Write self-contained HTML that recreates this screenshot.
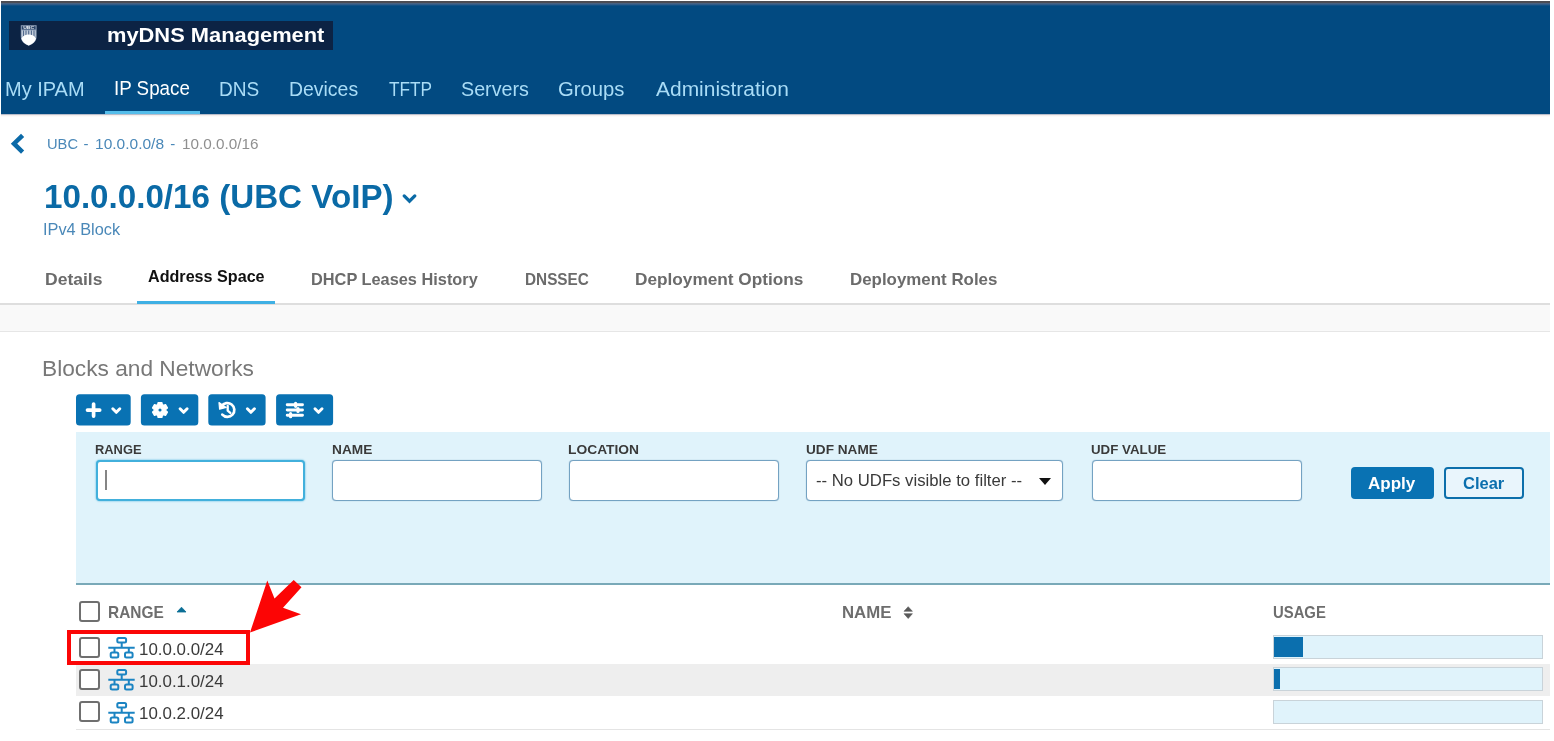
<!DOCTYPE html>
<html lang="en">
<head>
<meta charset="utf-8">
<title>myDNS Management</title>
<style>
*{box-sizing:border-box;margin:0;padding:0}
html,body{width:1554px;height:741px;overflow:hidden;background:#fff}
body{filter:blur(0.45px);position:relative;font-family:"Liberation Sans",sans-serif;color:#333}
.a{position:absolute;white-space:nowrap;line-height:1}
.t{position:absolute;white-space:nowrap;line-height:1;transform-origin:0 50%}
#hdr{left:1px;top:1px;width:1549px;height:113px;background:#024a81}
#topline{left:1px;top:1px;width:1549px;height:5px;background:linear-gradient(#4a4a50,#4c4e57 35%,#476283 50%,#2a5a8a 75%,#024a81)}
#hdrshadow{left:1px;top:114px;width:1549px;height:3px;background:linear-gradient(rgba(70,90,130,.55),rgba(200,170,160,.18) 50%,rgba(255,255,255,0))}
#logo{left:9px;top:21px;width:324px;height:29px;background:#0c2344}
#navline{left:105px;top:110.800px;width:94.500px;height:3.700px;background:#55bdea}
#tabline{left:0;top:303px;width:1550px;height:2px;background:#dedede}
#tabon{left:137px;top:300.800px;width:138px;height:3.200px;background:#3fb0e4}
#band{left:0;top:305px;width:1550px;height:26.500px;background:#f9f9f9;border-bottom:1.500px solid #e6e6e6}
#fpanel{left:76px;top:432px;width:1474px;height:152.600px;background:#e0f3fb;border-bottom:2px solid #79a9b8}
.inp{top:460px;height:41px;background:#fff;border:1px solid #74a2c2;border-radius:4px;box-shadow:0 0 1px #74a2c2}
.cb{width:21px;height:21px;border:2px solid #6f6f6f;border-radius:3px;background:#fff}
.bar{left:1273px;width:270px;height:24px;background:#e0f3fb;border:1px solid #c9d3d9}
.fill{left:1274px;height:20px;background:#0b6fae}
</style>
</head>
<body>
<div class="a" id="hdr"></div>
<div class="a" id="topline"></div>
<div class="a" id="hdrshadow"></div>
<div class="a" id="logo"></div>
<svg class="a" style="left:20px;top:24px" width="18" height="23" viewBox="20 24 18 23">
 <path d="M20.800 25.200h15.800v11.300c0 4.600-3.400 7.600-7.900 9.200c-4.500-1.600-7.900-4.600-7.900-9.200z" fill="#93a3bb"/>
 <path d="M21.800 26.200h13.800v3.300h-13.800z" fill="#2b4468"/>
 <text x="28.700" y="29.100" font-size="3.800" font-weight="bold" text-anchor="middle" fill="#eef2f7" font-family="Liberation Sans, sans-serif" textLength="11" lengthAdjust="spacingAndGlyphs">UBC</text>
 <path d="M21.800 30.500h13.800v6h-13.800z" fill="#c4cedc"/>
 <path d="M23.500 30.500v6M26 30.500v6M28.700 30.500v6M31.400 30.500v6M34 30.500v6" stroke="#50688c" stroke-width="1.100"/>
 <path d="M21.400 38.600c1.300-2.600 4.100-4 7.300-4s6 1.400 7.300 4c-.8 3.400-3.600 5.500-7.300 6.900c-3.700-1.400-6.500-3.500-7.300-6.900z" fill="#fff"/>
</svg>

<div class="a" id="navline"></div>

<svg class="a" style="left:8px;top:131px" width="20" height="26" viewBox="8 131 20 26"><path d="M22.600 135.300L14 143.700L22.600 152.100" stroke="#0b6aa8" stroke-width="4.500" fill="none" stroke-linejoin="miter"/></svg>

<svg class="a" style="left:398px;top:190px" width="24" height="18" viewBox="398 190 24 18"><path d="M404.200 195.900L409.500 201.100L414.800 195.900" stroke="#0a6aa6" stroke-width="3.300" fill="none" stroke-linecap="round" stroke-linejoin="miter"/></svg>

<div class="a" id="tabline"></div>
<div class="a" id="band"></div>
<div class="a" id="tabon"></div>


<svg class="a" style="left:70px;top:390px" width="270" height="40" viewBox="70 390 270 40">
<g fill="#0972b3"><rect x="76" y="394.300" width="54.700" height="31.200" rx="3.500"/><rect x="140.900" y="394.300" width="57.400" height="31.200" rx="3.500"/><rect x="208.300" y="394.300" width="57.300" height="31.200" rx="3.500"/><rect x="276.100" y="394.300" width="57" height="31.200" rx="3.500"/></g>
<path d="M87.500 410.100H99.700M93.600 404.100V416.100" stroke="#fff" stroke-width="3.700" stroke-linecap="round" fill="none"/>
<path d="M112.8 408.800 L116.3 412.300 L119.8 408.800" stroke="#fff" stroke-width="3" fill="none" stroke-linecap="round" stroke-linejoin="round"/>
<path transform="translate(160 410)" fill="#fff" fill-rule="evenodd" stroke="#fff" stroke-width="1.300" stroke-linejoin="round" d="M-2.30 -5.43 L-1.91 -7.46 L1.91 -7.46 L2.30 -5.43 L3.56 -4.71 L5.51 -5.38 L7.41 -2.08 L5.85 -0.73 L5.85 0.73 L7.41 2.08 L5.51 5.38 L3.56 4.71 L2.30 5.43 L1.91 7.46 L-1.91 7.46 L-2.30 5.43 L-3.56 4.71 L-5.51 5.38 L-7.41 2.08 L-5.85 0.73 L-5.85 -0.73 L-7.41 -2.08 L-5.51 -5.38 L-3.56 -4.71Z M2.2 0 A2.2 2.2 0 1 0 -2.2 0 A2.2 2.2 0 1 0 2.2 0Z"/>
<path d="M180.1 408.800 L183.6 412.300 L187.1 408.800" stroke="#fff" stroke-width="3" fill="none" stroke-linecap="round" stroke-linejoin="round"/>
<path d="M221.600 406.300A6.900 6.900 0 1 1 222.300 414.600" stroke="#fff" stroke-width="2.700" fill="none" stroke-linecap="round"/>
<path d="M219 402.600L219.600 409.200L226.200 407.400Z" fill="#fff" stroke="#fff" stroke-width="1.200" stroke-linejoin="round"/>
<path d="M227.700 406V410.700L230.300 412.900" stroke="#fff" stroke-width="2.300" fill="none" stroke-linecap="round" stroke-linejoin="round"/>
<path d="M247.4 408.800 L250.9 412.300 L254.4 408.800" stroke="#fff" stroke-width="3" fill="none" stroke-linecap="round" stroke-linejoin="round"/>
<path d="M287.200 404.800H302.500M287.200 410H302.500M287.200 415.200H302.500" stroke="#fff" stroke-width="2.900" stroke-linecap="round" fill="none"/>
<path d="M295.600 403.300V406.300M298 408.500V411.500M290.600 413.700V416.700" stroke="#fff" stroke-width="3.200" stroke-linecap="round" fill="none"/>
<path d="M315.0 408.800 L318.5 412.300 L322.0 408.800" stroke="#fff" stroke-width="3" fill="none" stroke-linecap="round" stroke-linejoin="round"/>
</svg>

<div class="a" id="fpanel"></div>
<div class="a inp" style="left:96px;width:209px;border:2px solid #42b0dc;box-shadow:0 0 2px #42b0dc"></div>
<div class="a" style="left:105px;top:469.500px;width:2px;height:20.500px;background:#858585"></div>
<div class="a inp" style="left:332px;width:210px"></div>
<div class="a inp" style="left:569px;width:210px"></div>
<div class="a inp" style="left:806px;width:257px"></div>
<div class="a" style="left:1039px;top:478px;width:0;height:0;border-left:6px solid transparent;border-right:6px solid transparent;border-top:7px solid #111"></div>
<div class="a inp" style="left:1092px;width:210px"></div>
<div class="a" style="left:1351px;top:466.700px;width:83px;height:32px;background:#0972b3;border-radius:4px"></div>
<div class="a" style="left:1444px;top:466.700px;width:80px;height:32px;background:#e9f5fc;border:2.400px solid #0c6fab;border-radius:4px"></div>

<div class="a" style="left:76px;top:664px;width:1474px;height:32px;background:#eeeeee"></div>
<div class="a" style="left:76px;top:729px;width:1474px;height:1px;background:#e4e4e4"></div>

<div class="a cb" style="left:79px;top:601px"></div>
<svg class="a" style="left:107px;top:636.1px" width="30" height="24" viewBox="107 -1 30 24"><g fill="none" stroke="#1b84c2" stroke-width="2"><rect x="117.300" y="1" width="8.800" height="4.600" rx="1.500"/><rect x="110.700" y="15.500" width="7.600" height="5" rx="1.500"/><rect x="125" y="15.500" width="7.600" height="5" rx="1.500"/><path d="M121.700 5.600V10.800M108.300 10.800H134.700M114.500 10.800V15.500M128.800 10.800V15.500"/></g></svg>
<svg class="a" style="left:107px;top:668.3px" width="30" height="24" viewBox="107 -1 30 24"><g fill="none" stroke="#1b84c2" stroke-width="2"><rect x="117.300" y="1" width="8.800" height="4.600" rx="1.500"/><rect x="110.700" y="15.500" width="7.600" height="5" rx="1.500"/><rect x="125" y="15.500" width="7.600" height="5" rx="1.500"/><path d="M121.700 5.600V10.800M108.300 10.800H134.700M114.500 10.800V15.500M128.800 10.800V15.500"/></g></svg>
<svg class="a" style="left:107px;top:700.6px" width="30" height="24" viewBox="107 -1 30 24"><g fill="none" stroke="#1b84c2" stroke-width="2"><rect x="117.300" y="1" width="8.800" height="4.600" rx="1.500"/><rect x="110.700" y="15.500" width="7.600" height="5" rx="1.500"/><rect x="125" y="15.500" width="7.600" height="5" rx="1.500"/><path d="M121.700 5.600V10.800M108.300 10.800H134.700M114.500 10.800V15.500M128.800 10.800V15.500"/></g></svg>
<svg class="a" style="left:176px;top:606px" width="11" height="7" viewBox="0 0 11 7"><path d="M1 6L5.500 1.200L10 6Z" fill="#0a6e96" stroke="#0a6e96" stroke-width="0.800" stroke-linejoin="round"/></svg>
<svg class="a" style="left:903px;top:606px" width="11" height="14" viewBox="0 0 11 14"><path d="M1 5.300L5.200 0.700L9.400 5.300ZM1 7.700L5.200 12.500L9.400 7.700Z" fill="#5a5a5a" stroke="#5a5a5a" stroke-width="0.600" stroke-linejoin="round"/></svg>

<div class="a cb" style="left:79px;top:637px"></div>
<div class="a cb" style="left:79px;top:669px"></div>
<div class="a cb" style="left:79px;top:701px"></div>

<div class="a bar" style="top:635px"></div><div class="a fill" style="top:637px;width:29px"></div>
<div class="a bar" style="top:667px"></div><div class="a fill" style="top:669px;width:6px"></div>
<div class="a bar" style="top:700px"></div>

<div class="a" style="left:67px;top:630px;width:183px;height:35px;border:4px solid #fb0606"></div>
<svg class="a" style="left:240px;top:572px" width="70" height="66" viewBox="240 572 70 66"><polygon points="250,632.500 267.300,580.500 274.500,598.500 293.700,580 301.500,587.300 283,607.800 301,614.300" fill="#fc0505"/></svg>
<div class="t" style="left:107.10px;top:24.98px;font-size:20.7px;font-weight:bold;color:#fff;transform:scaleX(1.0564);">myDNS Management</div>
<div class="t" style="left:5.17px;top:80.46px;font-size:19.3px;color:#a9dcf6;transform:scaleX(1.0360);">My IPAM</div>
<div class="t" style="left:114.25px;top:79.46px;font-size:19.3px;color:#fff;transform:scaleX(0.9741);">IP Space</div>
<div class="t" style="left:218.85px;top:80.46px;font-size:19.3px;color:#a9dcf6;transform:scaleX(0.9890);">DNS</div>
<div class="t" style="left:289.00px;top:80.46px;font-size:19.3px;color:#a9dcf6;transform:scaleX(1.0077);">Devices</div>
<div class="t" style="left:389.37px;top:80.46px;font-size:19.3px;color:#a9dcf6;transform:scaleX(0.8941);">TFTP</div>
<div class="t" style="left:461.20px;top:80.46px;font-size:19.3px;color:#a9dcf6;transform:scaleX(1.0221);">Servers</div>
<div class="t" style="left:558.23px;top:80.46px;font-size:19.3px;color:#a9dcf6;transform:scaleX(1.0520);">Groups</div>
<div class="t" style="left:655.66px;top:80.46px;font-size:19.3px;color:#a9dcf6;transform:scaleX(1.0869);">Administration</div>
<div class="t" style="left:46.51px;top:135.70px;font-size:15px;color:#4a88b8;transform:scaleX(0.9792);">UBC</div>
<div class="t" style="left:83.47px;top:135.70px;font-size:15px;color:#4a88b8;">-</div>
<div class="t" style="left:94.50px;top:135.70px;font-size:15px;color:#4a88b8;transform:scaleX(1.0346);">10.0.0.0/8</div>
<div class="t" style="left:170.15px;top:135.70px;font-size:15px;color:#4a88b8;">-</div>
<div class="t" style="left:181.58px;top:135.70px;font-size:15px;color:#8f8f8f;transform:scaleX(1.0186);">10.0.0.0/16</div>
<div class="t" style="left:44.14px;top:180.79px;font-size:32.5px;font-weight:bold;color:#0a6aa6;transform:scaleX(1.0203);">10.0.0.0/16 (UBC VoIP)</div>
<div class="t" style="left:43.48px;top:222.16px;font-size:16px;color:#4a88b8;transform:scaleX(1.0200);">IPv4 Block</div>
<div class="t" style="left:44.55px;top:271.09px;font-size:16.2px;font-weight:bold;color:#6b6b6b;transform:scaleX(1.0824);">Details</div>
<div class="t" style="left:148.02px;top:268.19px;font-size:16.2px;font-weight:bold;color:#111;transform:scaleX(0.9967);">Address Space</div>
<div class="t" style="left:311.33px;top:271.09px;font-size:16.2px;font-weight:bold;color:#6b6b6b;transform:scaleX(1.0091);">DHCP Leases History</div>
<div class="t" style="left:524.94px;top:271.09px;font-size:16.2px;font-weight:bold;color:#6b6b6b;transform:scaleX(0.9465);">DNSSEC</div>
<div class="t" style="left:634.55px;top:271.09px;font-size:16.2px;font-weight:bold;color:#6b6b6b;transform:scaleX(1.0640);">Deployment Options</div>
<div class="t" style="left:850.11px;top:271.09px;font-size:16.2px;font-weight:bold;color:#6b6b6b;transform:scaleX(1.0436);">Deployment Roles</div>
<div class="t" style="left:42.27px;top:357.88px;font-size:22px;color:#787878;transform:scaleX(1.0318);">Blocks and Networks</div>
<div class="t" style="left:95.12px;top:442.57px;font-size:13.5px;font-weight:bold;color:#3a3a3a;transform:scaleX(0.9536);">RANGE</div>
<div class="t" style="left:332.18px;top:442.57px;font-size:13.5px;font-weight:bold;color:#3a3a3a;transform:scaleX(1.0135);">NAME</div>
<div class="t" style="left:568.48px;top:442.57px;font-size:13.5px;font-weight:bold;color:#3a3a3a;transform:scaleX(1.0227);">LOCATION</div>
<div class="t" style="left:805.86px;top:442.57px;font-size:13.5px;font-weight:bold;color:#3a3a3a;transform:scaleX(1.0080);">UDF NAME</div>
<div class="t" style="left:1090.52px;top:442.57px;font-size:13.5px;font-weight:bold;color:#3a3a3a;transform:scaleX(0.9858);">UDF VALUE</div>
<div class="t" style="left:815.85px;top:473.46px;font-size:16px;color:#3a3a3a;transform:scaleX(1.0444);">-- No UDFs visible to filter --</div>
<div class="t" style="left:1368.41px;top:474.83px;font-size:16.5px;font-weight:bold;color:#fff;transform:scaleX(1.0321);">Apply</div>
<div class="t" style="left:1462.57px;top:474.83px;font-size:16.5px;font-weight:bold;color:#0b6fae;transform:scaleX(0.9992);">Clear</div>
<div class="t" style="left:107.90px;top:604.49px;font-size:16.2px;font-weight:bold;color:#6e6e6e;transform:scaleX(0.9532);">RANGE</div>
<div class="t" style="left:841.63px;top:604.49px;font-size:16.2px;font-weight:bold;color:#6e6e6e;transform:scaleX(1.0363);">NAME</div>
<div class="t" style="left:1272.69px;top:604.49px;font-size:16.2px;font-weight:bold;color:#6e6e6e;transform:scaleX(0.9179);">USAGE</div>
<div class="t" style="left:138.67px;top:640.99px;font-size:16.2px;color:#3a3a3a;transform:scaleX(1.0439);">10.0.0.0/24</div>
<div class="t" style="left:138.67px;top:673.19px;font-size:16.2px;color:#3a3a3a;transform:scaleX(1.0439);">10.0.1.0/24</div>
<div class="t" style="left:138.67px;top:705.29px;font-size:16.2px;color:#3a3a3a;transform:scaleX(1.0439);">10.0.2.0/24</div>
</body>
</html>
